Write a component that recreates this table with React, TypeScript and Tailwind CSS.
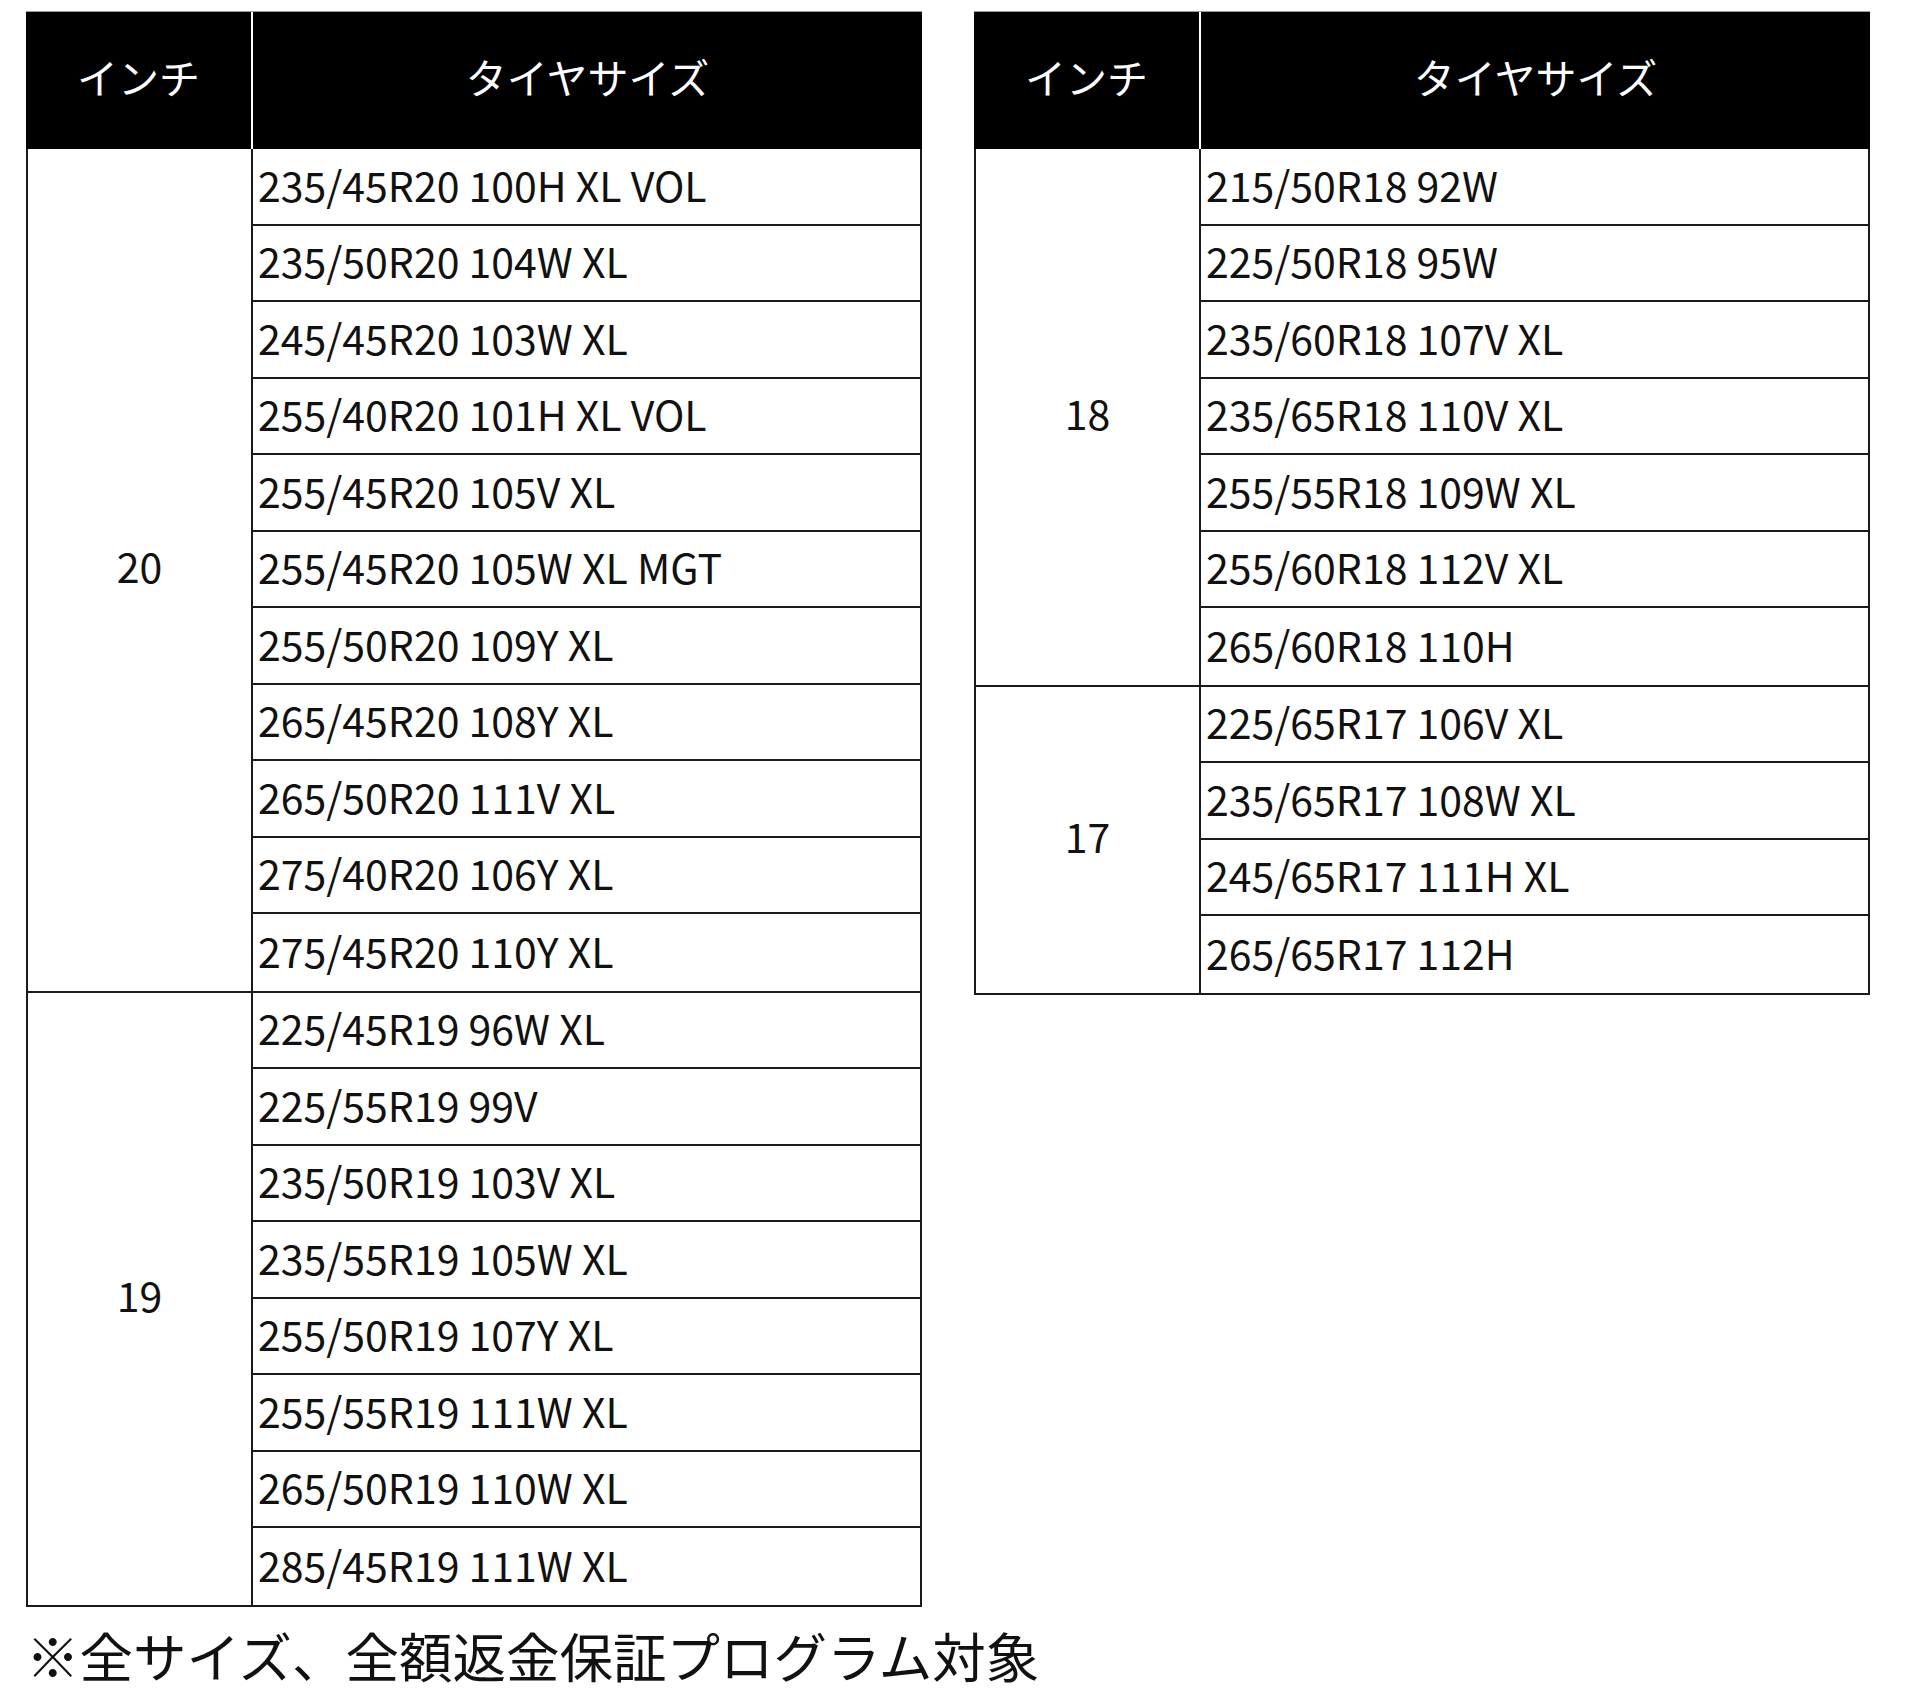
import React from "react";

type Group = { inch: string; sizes: string[] };

const leftGroups: Group[] = [
  {
    inch: "20",
    sizes: [
      "235/45R20 100H XL VOL",
      "235/50R20 104W XL",
      "245/45R20 103W XL",
      "255/40R20 101H XL VOL",
      "255/45R20 105V XL",
      "255/45R20 105W XL MGT",
      "255/50R20 109Y XL",
      "265/45R20 108Y XL",
      "265/50R20 111V XL",
      "275/40R20 106Y XL",
      "275/45R20 110Y XL",
    ],
  },
  {
    inch: "19",
    sizes: [
      "225/45R19 96W XL",
      "225/55R19 99V",
      "235/50R19 103V XL",
      "235/55R19 105W XL",
      "255/50R19 107Y XL",
      "255/55R19 111W XL",
      "265/50R19 110W XL",
      "285/45R19 111W XL",
    ],
  },
];

const rightGroups: Group[] = [
  {
    inch: "18",
    sizes: [
      "215/50R18 92W",
      "225/50R18 95W",
      "235/60R18 107V XL",
      "235/65R18 110V XL",
      "255/55R18 109W XL",
      "255/60R18 112V XL",
      "265/60R18 110H",
    ],
  },
  {
    inch: "17",
    sizes: [
      "225/65R17 106V XL",
      "235/65R17 108W XL",
      "245/65R17 111H XL",
      "265/65R17 112H",
    ],
  },
];

function SizeTable({ groups }: { groups: Group[] }) {
  return (
    <div className="w-[896px] flex flex-col">
      <div className="flex h-[138px] bg-black text-white border-t border-[#9a9a9a] text-[41px] leading-none">
        <div className="w-[227px] flex items-center justify-center border-r-2 border-white pb-[9px]">
          インチ
        </div>
        <div className="flex-1 flex items-center justify-center pb-[9px]">
          タイヤサイズ
        </div>
      </div>
      <div className="flex flex-col border-l-2 border-r-2 border-[#1a1a1a]">
        {groups.map((g) => (
          <div key={g.inch} className="flex border-b-2 border-[#1a1a1a]">
            <div className="w-[225px] flex items-center justify-center border-r-2 border-[#1a1a1a] text-[41px] leading-none pb-[8px]">
              {g.inch}
            </div>
            <div className="flex-1 flex flex-col">
              {g.sizes.map((s, i) => (
                <div
                  key={s}
                  className={`h-[76.5px] flex items-center pl-[5px] pb-[4px] text-[41px] leading-none ${
                    i < g.sizes.length - 1 ? "border-b-2 border-[#1a1a1a]" : ""
                  }`}
                >
                  {s}
                </div>
              ))}
            </div>
          </div>
        ))}
      </div>
    </div>
  );
}

export default function App() {
  return (
    <div
      className="w-[1920px] h-[1698px] bg-white text-[#111] pl-[26px] pt-[11px]"
      style={{ fontFamily: '"Noto Sans CJK JP", "Noto Sans", sans-serif' }}
    >
      <div className="flex items-start gap-[52px]">
        <SizeTable groups={leftGroups} />
        <SizeTable groups={rightGroups} />
      </div>
      <div className="mt-[16px] text-[53.5px] leading-[1.2] text-[#111]">
        ※全サイズ、全額返金保証プログラム対象
      </div>
    </div>
  );
}
